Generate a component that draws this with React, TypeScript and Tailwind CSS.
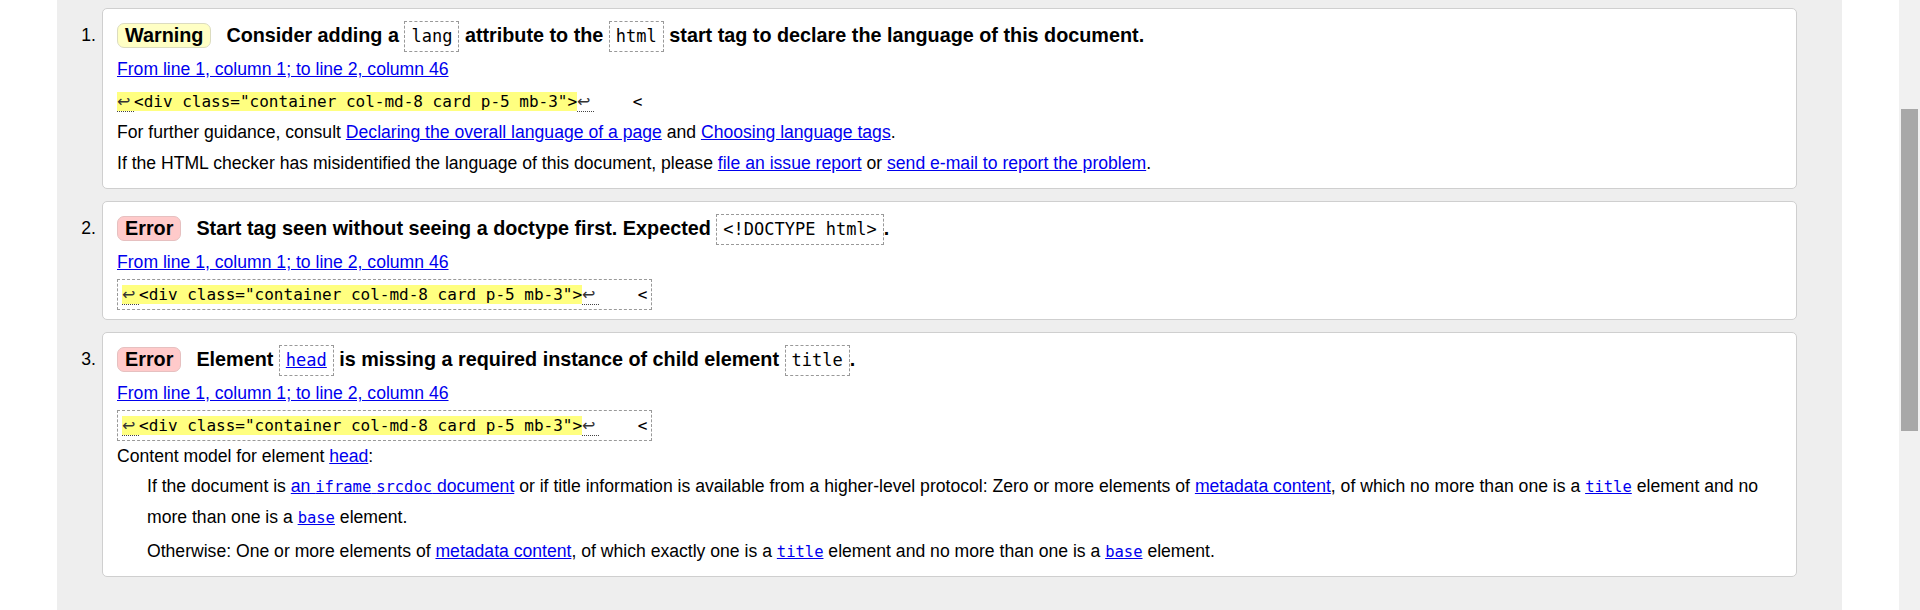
import type { ReactNode } from 'react'

const mono = "font-['DejaVu_Sans_Mono',monospace]"

function A({ children, code }: { children: ReactNode; code?: boolean }) {
  return (
    <a
      href="#"
      className={
        code
          ? "text-[#0000ee] underline font-['DejaVu_Sans_Mono',monospace] text-[15.5px]"
          : 'text-[#0000ee] underline'
      }
    >
      {children}
    </a>
  )
}

function Code({ children }: { children: ReactNode }) {
  return <code className={`${mono} text-[15.5px]`}>{children}</code>
}

// dashed box used for element / attribute names in the message title
function Box({ children }: { children: ReactNode }) {
  return (
    <code className="inline-block border border-dashed border-[#999] px-[6px] py-[5px] leading-[19px] font-['DejaVu_Sans_Mono',monospace] text-[17px] font-normal">
      {children}
    </code>
  )
}

function Badge({ kind }: { kind: 'Warning' | 'Error' }) {
  return (
    <strong
      className={
        kind === 'Warning'
          ? 'mr-[15px] inline-block rounded-[7px] border border-[#dcdcc0] bg-[#ffffc4] px-[7px] py-[1px] leading-[21px]'
          : 'mr-[15px] inline-block rounded-[7px] border border-[#e6c0c0] bg-[#ffcaca] px-[7px] py-[1px] leading-[21px]'
      }
    >
      {kind}
    </strong>
  )
}

// line break marker in the source extract
function Ret() {
  return (
    <span className="inline-block w-[17px] border-b border-dotted border-[#444] font-['DejaVu_Sans',sans-serif] leading-[18px] text-[#333]">
      ↩
    </span>
  )
}

function Extract({ boxed }: { boxed?: boolean }) {
  const text = (
    <code className="font-['DejaVu_Sans_Mono',monospace] text-[16px] whitespace-pre">
      <span className="bg-[#ffff80]">
        <Ret />
        {'<div class="container col-md-8 card p-5 mb-3">'}
      </span>
      <Ret />
      {'    <'}
    </code>
  )
  if (!boxed) return <div className="h-[32px] leading-[32px]">{text}</div>
  return (
    <div className="flex h-[32px] items-center">
      <div className="inline-block border border-dashed border-[#999] px-[4px] py-[4px] leading-[20px]">{text}</div>
    </div>
  )
}

function Item({ n, children }: { n: number; children: ReactNode }) {
  return (
    <div className="flex">
      <div className="w-[45px] shrink-0 pr-[6px] pt-[9px] text-right leading-[36px]">{n}.</div>
      <div className="flex-1 rounded-[5px] border border-[#cfcfcf] bg-white px-[14px] pt-[8px] pb-[9px]">
        {children}
      </div>
    </div>
  )
}

function Location() {
  return (
    <div className="h-[32px] leading-[32px]">
      <A>From line 1, column 1; to line 2, column 46</A>
    </div>
  )
}

export default function App() {
  return (
    <div className="flex h-[610px] w-[1920px] overflow-hidden bg-white font-['Liberation_Sans',Arial,sans-serif] text-[17.6px] text-black">
      <div className="flex flex-1 px-[57px]">
        <div className="flex flex-1 flex-col gap-[12px] bg-[#eeeeee] pt-[8px] pr-[45px]">
          <Item n={1}>
            <p className="text-[19.8px] font-bold leading-[36px]">
              <Badge kind="Warning" />
              Consider adding a <Box>lang</Box> attribute to the <Box>html</Box> start tag to declare the language of
              this document.
            </p>
            <Location />
            <Extract />
            <p className="leading-[31px]">
              For further guidance, consult <A>Declaring the overall language of a page</A> and{' '}
              <A>Choosing language tags</A>.
            </p>
            <p className="leading-[31px]">
              If the HTML checker has misidentified the language of this document, please <A>file an issue report</A>{' '}
              or <A>send e-mail to report the problem</A>.
            </p>
          </Item>

          <Item n={2}>
            <p className="text-[19.8px] font-bold leading-[36px]">
              <Badge kind="Error" />
              Start tag seen without seeing a doctype first. Expected <Box>{'<!DOCTYPE html>'}</Box>.
            </p>
            <Location />
            <Extract boxed />
          </Item>

          <Item n={3}>
            <p className="text-[19.8px] font-bold leading-[36px]">
              <Badge kind="Error" />
              Element{' '}
              <Box>
                <a href="#" className="text-[#0000ee] underline">
                  head
                </a>
              </Box>{' '}
              is missing a required instance of child element <Box>title</Box>.
            </p>
            <Location />
            <Extract boxed />
            <p className="leading-[30px]">
              Content model for element <A>head</A>:
            </p>
            <div className="pl-[30px]">
              <p className="leading-[30px]">
                If the document is{' '}
                <a href="#" className="text-[#0000ee] underline">
                  an <Code>iframe</Code> <Code>srcdoc</Code> document
                </a>{' '}
                or if title information is available from a higher-level protocol: Zero or more elements of{' '}
                <A>metadata content</A>, of which no more than one is a <A code>title</A> element and no more than one
                is a <A code>base</A> element.
              </p>
              <p className="mt-[3px] leading-[30px]">
                Otherwise: One or more elements of <A>metadata content</A>, of which exactly one is a{' '}
                <A code>title</A> element and no more than one is a <A code>base</A> element.
              </p>
            </div>
          </Item>
        </div>
      </div>
      <div className="w-[21px] shrink-0 bg-[#f1f1f1] px-[2px] pt-[109px]">
        <div className="h-[322px] bg-[#a8a8a8]" />
      </div>
    </div>
  )
}
